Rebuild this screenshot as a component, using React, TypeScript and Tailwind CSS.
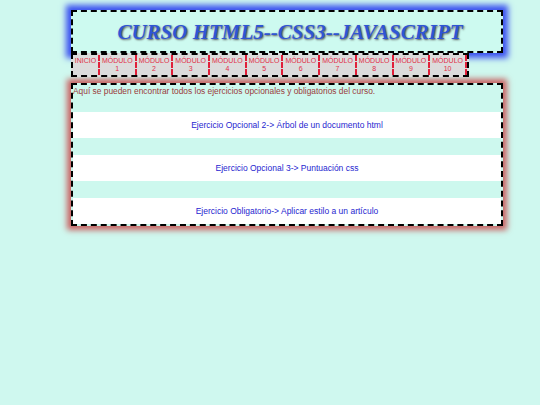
import React from 'react';

const modulos = ['1', '2', '3', '4', '5', '6', '7', '8', '9', '10'];

const ejercicios = [
	'Ejercicio Opcional 2-> Árbol de un documento html',
	'Ejercicio Opcional 3-> Puntuación css',
	'Ejercicio Obligatorio-> Aplicar estilo a un artículo',
];

export default function App() {
	return (
		<div className="min-h-[405px] w-[540px] bg-[#cff8ef] pt-[10px] font-['Liberation_Sans',Arial,sans-serif]">
			<div className="ml-[71px] w-[432px]">
				{/* cabecera */}
				<header className="flex h-[43px] items-center justify-center border-2 border-dashed border-black bg-[#cdfaf0] shadow-[0_0_6px_5px_#3b52f0]">
					<h1 className="pl-[6px] pt-[2px] font-['Liberation_Serif',serif] text-[21px] font-bold italic leading-none text-[#2f55d4] [text-shadow:1px_1px_2px_#555]">
						CURSO HTML5--CSS3--JAVASCRIPT
					</h1>
				</header>

				{/* menú */}
				<nav className="relative flex h-[24px] w-[398px] border-2 border-dashed border-black bg-[#dcdcdc]">
					<a className="flex w-[27px] items-start justify-center border-r-2 border-dashed border-[#e0203a] pt-[2px] text-[7px] leading-[8px] text-[#e0304a]">
						INICIO
					</a>
					{modulos.map((m) => (
						<a
							key={m}
							className="flex w-[36.8px] flex-col items-center border-r-2 border-dashed border-[#e0203a] pt-[2px] text-[7px] leading-[8px] text-[#e0304a]"
						>
							<span>MÓDULO</span>
							<span>{m}</span>
						</a>
					))}
				</nav>

				{/* contenido */}
				<main className="mt-[6px] border-2 border-dashed border-black bg-[#cdf8ee] shadow-[0_0_6px_4px_#c86060]">
					<p className="h-[27px] pt-[1px] text-[8.4px] leading-[10px] text-[#9a3c3c]">
						Aquí se pueden encontrar todos los ejercicios opcionales y obligatorios del curso.
					</p>
					<div className="flex flex-col gap-[17px]">
						{ejercicios.map((e) => (
							<div key={e} className="flex h-[26px] items-center justify-center bg-white">
								<a className="text-[8.5px] text-[#2626d0]">{e}</a>
							</div>
						))}
					</div>
				</main>
			</div>
		</div>
	);
}
